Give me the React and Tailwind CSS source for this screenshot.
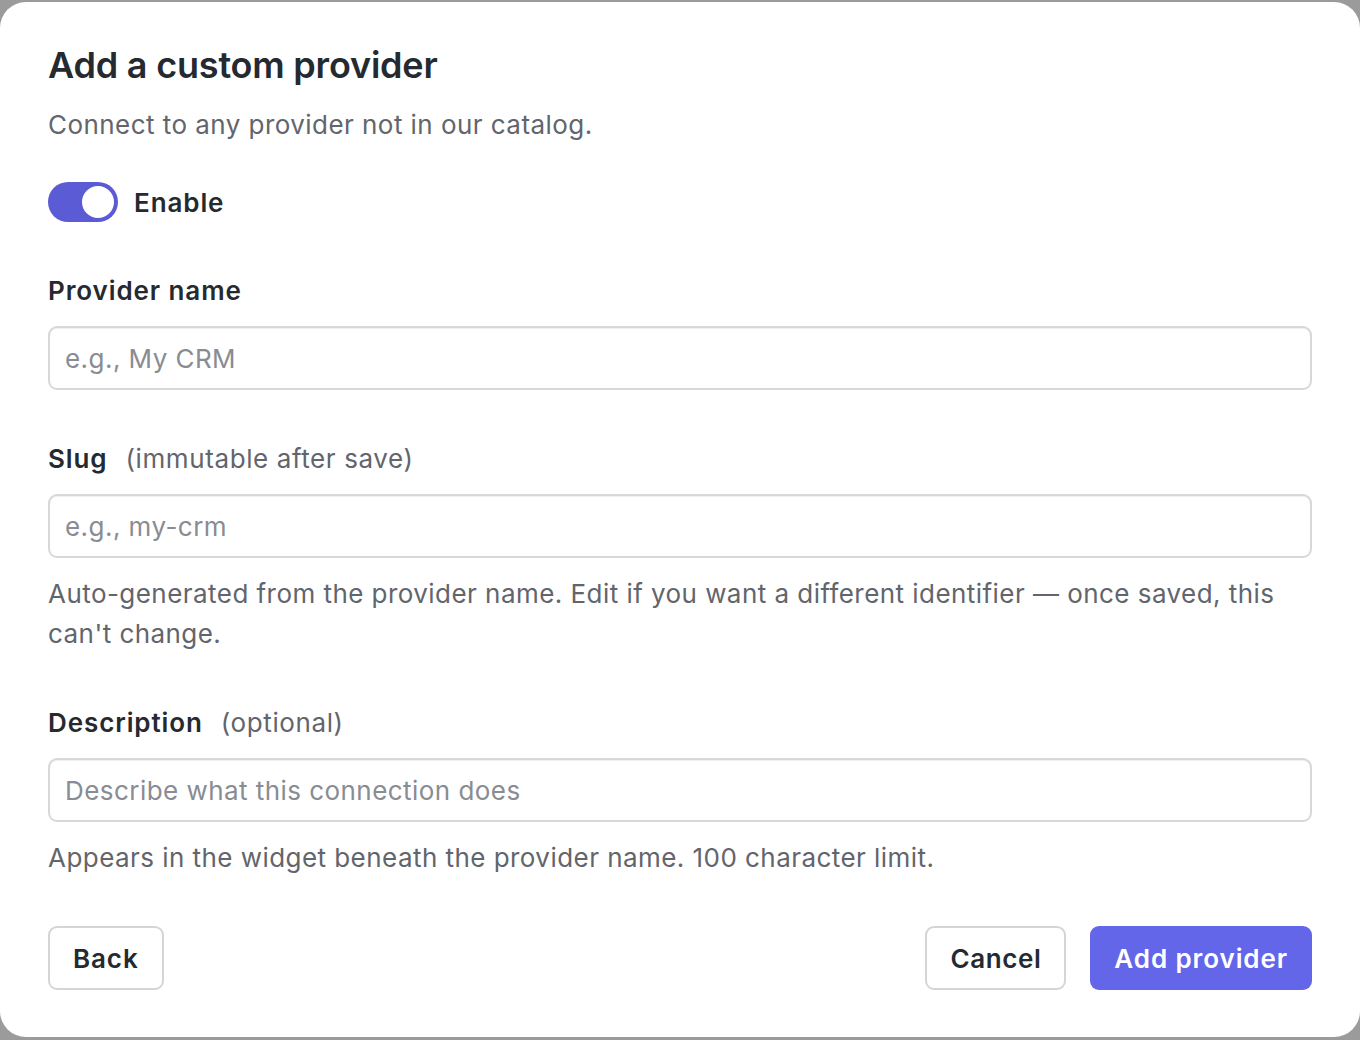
import React, { useState } from "react";

function Toggle({ on, onChange }) {
  return (
    <button
      type="button"
      onClick={() => onChange(!on)}
      className={`relative h-[40px] w-[70px] rounded-full ${on ? "bg-[#5b5bd6]" : "bg-[#d1d5db]"}`}
    >
      <span
        className={`absolute top-[2px] h-[36px] w-[36px] rounded-full border-2 border-[#5b5bd6] bg-white ${on ? "left-[32px]" : "left-[2px]"}`}
      />
    </button>
  );
}

function Field({ label, hint, placeholder, help }) {
  return (
    <div className="flex flex-col">
      <div className="flex items-baseline gap-[18px] leading-[40px]">
        <span className="text-[26px] font-semibold tracking-[0.9px] text-[#252a31]">{label}</span>
        {hint && <span className="text-[26px] tracking-[0.6px] text-[#62656c]">{hint}</span>}
      </div>
      <input
        placeholder={placeholder}
        className="mt-[15px] h-[64px] w-full rounded-[9px] border-2 border-[#d8d8da] bg-white px-[15px] text-[26px] tracking-[0.45px] text-[#252a31] shadow-[inset_0_1px_1px_rgba(0,0,0,0.06)] outline-none placeholder:text-[#898c92]"
      />
      {help && (
        <p className="mt-[16px] text-[26px] leading-[40px] tracking-[0.45px] text-[#62656c]">{help}</p>
      )}
    </div>
  );
}

export default function App() {
  const [enabled, setEnabled] = useState(true);
  return (
    <div
      className="h-[1040px] w-[1360px] bg-[#9b9b9b] pt-[2px] pb-[3px]"
      style={{ fontFamily: "Inter, 'Noto Sans', sans-serif" }}
    >
      <div className="flex h-full flex-col rounded-[26px] bg-white px-[48px] pt-[39px]">
        <h1 className="text-[36px] font-semibold leading-[48px] tracking-[-0.2px] text-[#252a31]">
          Add a custom provider
        </h1>
        <p className="mt-[16px] text-[26px] leading-[40px] tracking-[0.45px] text-[#62656c]">
          Connect to any provider not in our catalog.
        </p>

        <div className="mt-[37px] flex items-center gap-[16px]">
          <Toggle on={enabled} onChange={setEnabled} />
          <span className="text-[26px] font-semibold tracking-[0.9px] text-[#252a31]">Enable</span>
        </div>

        <div className="mt-[49px] flex flex-col gap-[49px]">
          <Field label="Provider name" placeholder="e.g., My CRM" />
          <Field
            label="Slug"
            hint="(immutable after save)"
            placeholder="e.g., my-crm"
            help="Auto-generated from the provider name. Edit if you want a different identifier — once saved, this can't change."
          />
          <Field
            label="Description"
            hint="(optional)"
            placeholder="Describe what this connection does"
            help="Appears in the widget beneath the provider name. 100 character limit."
          />
        </div>

        <div className="mt-[48px] flex items-center">
          <button className="h-[64px] rounded-[9px] border-2 border-[#d5d5d9] bg-white px-[23px] text-[26px] font-semibold tracking-[0.9px] text-[#252a31]">
            Back
          </button>
          <div className="ml-auto flex items-center gap-[24px]">
            <button className="h-[64px] rounded-[9px] border-2 border-[#d5d5d9] bg-white px-[23px] text-[26px] font-semibold tracking-[0.6px] text-[#252a31]">
              Cancel
            </button>
            <button className="h-[64px] rounded-[9px] bg-[#6466ea] px-[24px] text-[26px] font-semibold tracking-[0.9px] text-white">
              Add provider
            </button>
          </div>
        </div>
      </div>
    </div>
  );
}
